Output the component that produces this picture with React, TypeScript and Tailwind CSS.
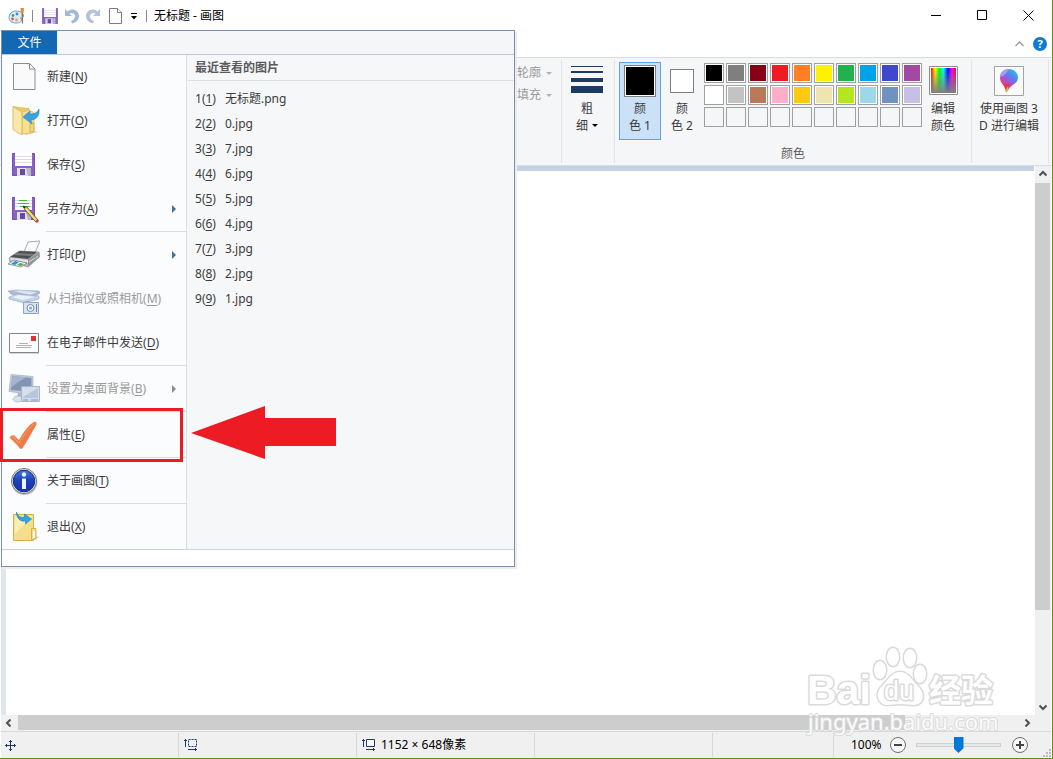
import { ReactNode } from 'react';

type MenuEntry = {
    label: string;
    accessKey: string;
    icon: ReactNode;
    submenu?: boolean;
    disabled?: boolean;
    divider?: boolean;
};

const palette = [
    ['#000000', '#7f7f7f', '#880015', '#ed1c24', '#ff7f27', '#fff200', '#22b14c', '#00a2e8', '#3f48cc', '#a349a4'],
    ['#ffffff', '#c3c3c3', '#b97a57', '#ffaec9', '#ffc90e', '#efe4b0', '#b5e61d', '#99d9ea', '#7092be', '#c8bfe7'],
    [null, null, null, null, null, null, null, null, null, null],
];

const recentFiles = ['无标题.png', '0.jpg', '7.jpg', '6.jpg', '5.jpg', '4.jpg', '3.jpg', '2.jpg', '1.jpg'];

function Icon({ children }: { children: ReactNode }) {
    return (
        <svg viewBox="0 0 32 32" className="size-8 shrink-0" aria-hidden="true">
            {children}
        </svg>
    );
}

function Floppy() {
    return (
        <>
            <path d="M4.5 4.5h22v22h-22z" fill="#8a63c0" stroke="#7450ac" />
            <path d="M7 4h17v13H7z" fill="#fff" />
            <path d="M7 7.5h17M7 10.5h17M7 13.5h17" stroke="#d9dbe0" />
            <path d="M9 19h14v8H9z" fill="#dfe1e6" />
            <path d="M12 20h5v6h-5z" fill="#6c4aa3" />
            <path d="M18 19h5v8h-3z" fill="#b4b8c3" />
        </>
    );
}

const newIcon = (
    <Icon>
        <path d="M5.5 2.5h16l5.5 5.5v20.5H5.5z" fill="#fafafa" stroke="#8c8c8c" strokeLinejoin="round" />
        <path d="M21.5 2.5V8H27z" fill="#fff" stroke="#8c8c8c" strokeLinejoin="round" />
    </Icon>
);

const openIcon = (
    <Icon>
        <path d="M12 27l16-1 3 1-13 3z" fill="#c9c9c9" opacity=".6" />
        <path d="M5 1.5l6 1 10 1v22l-9 2z" fill="#eccb66" stroke="#d8b354" strokeWidth=".7" />
        <path d="M14 7l7-2 5 3v18l-2 2-10 1z" fill="#f5df92" stroke="#d9b65a" strokeWidth=".7" />
        <path d="M5 1.5l8 5c1 1 1 2 1 3v20l-3-1-6-4z" fill="#f8e9a8" stroke="#d6b04f" strokeWidth=".8" />
        <path d="M22 18h4v9h-4z" fill="#f0d47c" stroke="#d2aa48" strokeWidth=".8" />
        <path d="M15 12l7-6v3c4 0 7-1 9-5 1 7-3 11-8 11l1 4z" fill="#37a3e0" stroke="#1f7fbe" strokeWidth=".5" />
    </Icon>
);

const saveIcon = (
    <Icon>
        <Floppy />
    </Icon>
);

const saveAsIcon = (
    <Icon>
        <Floppy />
        <path d="M11 7.5h8M10 10.5h11M12 13.5h10" stroke="#4fae4f" strokeWidth="1.2" />
        <path d="M15 13l4 1 11 13-2 2-11-12z" fill="#f3cf5c" stroke="#3b3324" strokeWidth=".7" />
        <path d="M15 13l1 2.5 2-1.5z" fill="#222" />
        <path d="M18 16l10 12" stroke="#fff3b0" strokeWidth=".8" />
        <path d="M27 28.5l2.5-2.5 1.500 2-2 2z" fill="#c83c34" />
    </Icon>
);

const printIcon = (
    <Icon>
        <path d="M16 13l4-10 12-1-6 14z" fill="#fbfbfb" stroke="#868686" strokeWidth=".7" />
        <path d="M1 19l10-7 20 1 .5 5L20 28 2 23z" fill="#b9babc" stroke="#8b8d8f" strokeWidth=".7" />
        <path d="M2 18l10-6 17 1-9 7z" fill="#4b4e50" />
        <path d="M9 14l17 1-3 2-18-1z" fill="#7a7d80" />
        <path d="M20 20l11-7 .5 5L20 28z" fill="#939598" />
        <path d="M21 23l9-6" stroke="#dcdddd" />
        <path d="M2 19l18 2v3L3 21z" fill="#e5e5e5" />
        <path d="M0 25l6-4 13 3-6 4z" fill="#eaf5fb" stroke="#6b7175" strokeWidth=".7" />
        <path d="M3 25l4-3 4 1-4 3z" fill="#2795d4" />
        <path d="M9 26l3-2 4 1-3 2z" fill="#58a948" />
        <path d="M26 18h2" stroke="#41b94c" />
    </Icon>
);

const scanIcon = (
    <Icon>
        <path d="M0 8l9-1 22 1 1 2-3 2-9 3L3 11z" fill="#a9bad2" stroke="#97a9c6" strokeWidth=".6" />
        <path d="M5 8l8-.5 16 1.500-7 3z" fill="#dbe5f2" />
        <path d="M1 14l8-3 22 2v3l-15 4-15-4z" fill="#c6d3e6" stroke="#97a9c6" strokeWidth=".6" />
        <path d="M4 14l7-2 16 2-12 3z" fill="#eaf0f8" />
        <path d="M15.5 19.5h15v11h-15z" fill="#d8e3f2" stroke="#8fa3c5" />
        <path d="M17 18h5v2h-5z" fill="#9fb1ce" />
        <circle cx="22.5" cy="25" r="3.5" fill="#f3f7fc" stroke="#748db5" />
        <circle cx="22.5" cy="25" r="1.5" fill="#8ba1c4" />
        <path d="M28.5 21v8" stroke="#6e88b1" />
    </Icon>
);

const mailIcon = (
    <Icon>
        <path d="M2 8h29v19H2z" fill="#d5d5d5" />
        <path d="M1.5 6.500h29v19h-29z" fill="#fcfcfc" stroke="#858585" strokeLinejoin="round" />
        <path d="M11 16.5h9M8 18.5h16M8 20.5h15" stroke="#b2b2b2" />
        <path d="M23 9h5v5h-5z" fill="#de3434" />
    </Icon>
);

const desktopIcon = (
    <Icon>
        <path d="M3 1.5l22 2v18L1 18.500z" fill="#c0cbdc" stroke="#a3b0c7" strokeWidth=".7" />
        <path d="M4.5 3l19 2v14L2.5 17z" fill="#8295b6" />
        <path d="M4.5 3l14 1.500C12 7 7 11 3 15z" fill="#a6b5ce" />
        <path d="M10 20h5l1 6H8z" fill="#aab8cf" />
        <ellipse cx="10" cy="26" rx="5" ry="3" fill="#d8e0ec" stroke="#a9b7cd" strokeWidth=".7" />
        <path d="M13.5 13.5h18v15h-18z" fill="#d1dbe9" stroke="#a9b7cd" />
        <path d="M15 15h15v10H15z" fill="#b8c6db" />
        <path d="M15 15h15L15 24z" fill="#d5dfed" />
        <path d="M15 27h5M23 27h7" stroke="#8396b6" />
    </Icon>
);

const propertiesIcon = (
    <Icon>
        <path
            d="M2 18.5c1-2 4-3 5-1l4 4C15 14 21 6 25 4c2-2 4-1 3 2-5 8-9 16-13 22-1 2-3 2-4 0-3-4-6-6-9-9.500z"
            fill="#ef7c46"
            stroke="#e06f3e"
            strokeWidth=".5"
        />
        <path d="M4 18c1-1 2 0 3 2l4 4C15 17 21 9 26 5" fill="none" stroke="#f7a073" />
    </Icon>
);

const aboutIcon = (
    <Icon>
        <defs>
            <linearGradient id="info" x1="0" y1="0" x2="0" y2="1">
                <stop offset="0" stopColor="#4b73db" />
                <stop offset=".5" stopColor="#173fbd" />
                <stop offset="1" stopColor="#1735a8" />
            </linearGradient>
        </defs>
        <circle cx="16.5" cy="17" r="13" fill="#bfbfbf" />
        <circle cx="16" cy="16" r="12.5" fill="#e8e8ea" stroke="#747980" />
        <circle cx="16" cy="16" r="10.8" fill="url(#info)" stroke="#1b3477" />
        <circle cx="16" cy="9.5" r="2.2" fill="#eef2fb" />
        <path d="M14 13.5h4V24h-4z" fill="#eef2fb" />
    </Icon>
);

const exitIcon = (
    <Icon>
        <path d="M10 28l18-3 3 1-3 3z" fill="#bbb" opacity=".6" />
        <path d="M5.5 3.5h20v26h-20z" fill="#f3de8c" stroke="#d6b04a" />
        <path d="M7 5h17L7 23z" fill="#f9eeb4" />
        <path d="M23.5 17.5h4.500v9l-4.500 3z" fill="#f3dc82" stroke="#d6b04a" />
        <path d="M25 20h2v7h-2z" fill="#fff" />
        <path d="M8.5 1c1 4 4 6 8 5V3l7 5-6 5v-3C12 11 8.5 7 8.5 1z" fill="#2da5e6" stroke="#1a7fb8" strokeWidth=".6" />
    </Icon>
);

const menuEntries: MenuEntry[] = [
    { label: '新建', accessKey: 'N', icon: newIcon },
    { label: '打开', accessKey: 'O', icon: openIcon },
    { label: '保存', accessKey: 'S', icon: saveIcon },
    { label: '另存为', accessKey: 'A', icon: saveAsIcon, submenu: true, divider: true },
    { label: '打印', accessKey: 'P', icon: printIcon, submenu: true },
    { label: '从扫描仪或照相机', accessKey: 'M', icon: scanIcon, disabled: true },
    { label: '在电子邮件中发送', accessKey: 'D', icon: mailIcon, divider: true },
    { label: '设置为桌面背景', accessKey: 'B', icon: desktopIcon, submenu: true, disabled: true, divider: true },
    { label: '属性', accessKey: 'E', icon: propertiesIcon, divider: true },
    { label: '关于画图', accessKey: 'T', icon: aboutIcon, divider: true },
    { label: '退出', accessKey: 'X', icon: exitIcon },
];

function TitleBar() {
    return (
        <header className="flex h-[31px] shrink-0 items-center bg-white pl-2">
            <svg viewBox="0 0 18 18" className="size-[18px]" aria-hidden="true">
                <path
                    d="M8 4C4 4 1 7 1 10.500S4 16 8 16s5-1 5.500-3S11 11 13 11s3-1 2.500-3C15 6 12 4 8 4z"
                    fill="#dcecf7"
                    stroke="#5fa3d6"
                />
                <circle cx="5" cy="8.5" r="1.4" fill="#4ba64f" />
                <circle cx="9" cy="7" r="1.4" fill="#3f87d0" />
                <circle cx="4.5" cy="12" r="1.4" fill="#e2574c" />
                <circle cx="8.5" cy="13" r="1.4" fill="#f1a52f" />
                <path d="M12.5 1h3.500l-.5 5h-2.500z" fill="#e08a3c" />
                <path d="M13.5 6H15v10l-1 1z" fill="#a8683a" />
            </svg>
            <span className="ml-[6px] h-3 w-px bg-[#8a8a8a]" />
            <button type="button" aria-label="保存" className="ml-2">
                <svg viewBox="4 4 23 23" className="size-[18px] p-px">
                    <Floppy />
                </svg>
            </button>
            <button type="button" aria-label="撤消" className="ml-1">
                <svg viewBox="0 0 18 18" className="size-[18px]">
                    <path d="M2 2v7h7L6.5 6.500C9 5 12 6.500 12 9s-1.500 4-4 5l1 2.500c4-1 7-3.500 7-7.500 0-5-6-9-11.500-4.500z" fill="#a3b8d8" />
                </svg>
            </button>
            <button type="button" aria-label="重做" className="ml-1">
                <svg viewBox="0 0 18 18" className="size-[18px]">
                    <path d="M15 2v7H8l2.500-2.500C8 5 5 6.500 5 9s1.500 4 4 5l-1 2.500C4 15.500 1 13 1 9c0-5 6-9 11.500-4.500z" fill="#b4c3dc" />
                </svg>
            </button>
            <button type="button" aria-label="新建" className="ml-1">
                <svg viewBox="0 0 18 18" className="size-[18px]">
                    <path d="M2.5 1.5h8l4 4v11h-12z" fill="#fbfbfb" stroke="#7d7d7d" />
                    <path d="M10.5 1.5v4h4" fill="#fff" stroke="#7d7d7d" />
                </svg>
            </button>
            <button type="button" aria-label="自定义快速访问工具栏" className="ml-[5px]">
                <svg viewBox="0 0 8 8" className="size-2">
                    <path d="M1 1.5h6" stroke="#000" />
                    <path d="M1 4h6L4 7.5z" fill="#000" />
                </svg>
            </button>
            <span className="ml-2 h-3 w-px bg-[#8a8a8a]" />
            <h1 className="ml-[7px] text-black">无标题 - 画图</h1>
            <div className="ml-auto flex">
                <button type="button" aria-label="最小化" className="flex h-[30px] w-[45px] items-center justify-center">
                    <svg viewBox="0 0 11 11" className="size-[11px]">
                        <path d="M0 5.5h10" stroke="#000" />
                    </svg>
                </button>
                <button type="button" aria-label="最大化" className="flex h-[30px] w-[46px] items-center justify-center">
                    <svg viewBox="0 0 11 11" className="size-[11px]">
                        <path d="M.5.5h9v9h-9z" fill="none" stroke="#000" />
                    </svg>
                </button>
                <button type="button" aria-label="关闭" className="flex h-[30px] w-[46px] items-center justify-center">
                    <svg viewBox="0 0 11 11" className="size-[11px]">
                        <path d="M.5.5l10 10M10.5.5l-10 10" stroke="#000" />
                    </svg>
                </button>
            </div>
        </header>
    );
}

function CaretDown({ className }: { className: string }) {
    return (
        <svg viewBox="0 0 6 3" className={className} aria-hidden="true">
            <path d="M0 0h6L3 3z" fill="currentColor" />
        </svg>
    );
}

function Ribbon() {
    return (
        <section className="flex h-[109px] shrink-0 border-y border-[#dadbdc] bg-[#f5f6f7] pt-[2px] text-[#3b3b3b]">
            <div className="flex h-[103px] w-[562px] shrink-0 flex-col items-end border-r border-[#e2e3e4] pt-[2px] pr-[9px] leading-[22px] text-[#9a9a9a]">
                <button type="button" disabled className="flex items-center gap-[5px]">
                    轮廓
                    <CaretDown className="h-[3px] w-[6px] text-[#b4b4b4]" />
                </button>
                <button type="button" disabled className="flex items-center gap-[5px]">
                    填充
                    <CaretDown className="h-[3px] w-[6px] text-[#b4b4b4]" />
                </button>
            </div>

            <div className="flex h-[103px] w-[53px] shrink-0 justify-center border-r border-[#e2e3e4] pr-[2px]">
                <button type="button" className="flex flex-col items-center pt-[6px] leading-[17px]">
                    <span className="mb-[7px] flex w-8 flex-col text-[#1f3a60]">
                        <span className="h-px bg-current" />
                        <span className="mt-1 h-[2px] bg-current" />
                        <span className="mt-[5px] h-1 bg-current" />
                        <span className="mt-1 h-[7px] bg-current" />
                    </span>
                    <span>粗</span>
                    <span className="flex items-center gap-1">
                        细
                        <CaretDown className="h-[3px] w-[6px] text-black" />
                    </span>
                </button>
            </div>

            <div className="flex h-[103px] w-[357px] shrink-0 flex-col border-r border-[#e2e3e4] px-1 pt-[2px]">
                <div className="flex items-start">
                    <button
                        type="button"
                        className="flex h-[78px] w-[42px] flex-col items-center border border-[#62a2e4] bg-[#cbe1f7] pt-[2px] leading-[17px]"
                    >
                        <span className="mb-[3px] size-8 border border-[#7f7f7f] bg-white p-px">
                            <span className="block size-full bg-black" />
                        </span>
                        <span>颜</span>
                        <span>色 1</span>
                    </button>
                    <button type="button" className="flex h-[78px] w-[42px] flex-col items-center pt-[7px] leading-[17px]">
                        <span className="mb-[7px] size-6 border border-[#7f7f7f] bg-white" />
                        <span>颜</span>
                        <span>色 2</span>
                    </button>
                    <div className="ml-px grid grid-cols-10 gap-[2px] pt-px">
                        {palette.flat().map((color, i) => (
                            <button
                                key={i}
                                type="button"
                                aria-label={color ?? '自定义颜色'}
                                className="size-5 border border-[#a0a0a0] p-px"
                                style={{ background: color ? '#fff' : undefined }}
                            >
                                <span className="block size-full" style={{ background: color ?? undefined }} />
                            </button>
                        ))}
                    </div>
                    <button type="button" className="ml-[5px] flex w-8 flex-col items-center pt-1 leading-[17px]">
                        <svg viewBox="0 0 29 30" className="mb-[4px] h-[30px] w-[29px]">
                            <defs>
                                <linearGradient id="hue">
                                    <stop offset="0" stopColor="#f00" />
                                    <stop offset=".17" stopColor="#ff0" />
                                    <stop offset=".33" stopColor="#0f0" />
                                    <stop offset=".5" stopColor="#0ff" />
                                    <stop offset=".67" stopColor="#00f" />
                                    <stop offset=".84" stopColor="#f0f" />
                                    <stop offset="1" stopColor="#f00" />
                                </linearGradient>
                                <linearGradient id="fade" x1="0" y1="0" x2="0" y2="1">
                                    <stop offset="0" stopColor="#808080" stopOpacity="0" />
                                    <stop offset="1" stopColor="#808080" />
                                </linearGradient>
                            </defs>
                            <path d="M.5.5h28v28H.5z" fill="#fff" stroke="#8d8d8d" />
                            <path d="M2 2h25v25H2z" fill="url(#hue)" />
                            <path d="M2 2h25v25H2z" fill="url(#fade)" />
                        </svg>
                        <span>编辑</span>
                        <span>颜色</span>
                    </button>
                </div>
                <div className="mt-[5px] text-center leading-[18px] text-[#5a5a5a]">颜色</div>
            </div>

            <div className="flex h-[103px] min-w-[77px] grow justify-center border-r border-[#e2e3e4] pr-[2px]">
                <button type="button" className="flex flex-col items-center pt-[6px] leading-[17px] whitespace-nowrap">
                    <svg viewBox="0 0 30 30" className="mb-[4px] size-[30px]">
                        <defs>
                            <linearGradient id="drop" x1=".9" y1="0" x2=".2" y2="1">
                                <stop offset="0" stopColor="#1fd0f0" />
                                <stop offset=".35" stopColor="#5a7fee" />
                                <stop offset=".6" stopColor="#b04fd0" />
                                <stop offset=".8" stopColor="#ee4060" />
                                <stop offset="1" stopColor="#f7a030" />
                            </linearGradient>
                        </defs>
                        <path d="M.5.5h29v29H.5z" fill="#fafafa" stroke="#a3a3a3" />
                        <path d="M15 3c5 0 9 4 9 8.500 0 6-6 7-9 11-1 2-2 3-3 4-.5-3 .5-5-2-7-3-2.500-4-5-4-8C6 7 10 3 15 3z" fill="url(#drop)" />
                        <path d="M6 11c0-5 4-8 9-8-2 4-5 7-9 8z" fill="#a59cf4" />
                        <path d="M8 17c3 2 6 1 9 0-2 3-3 4-5 9-.5-4-2-6-4-9z" fill="#e83458" />
                        <path d="M12 26.5c0-3 0-4 2-6 1 2 0 4-2 6z" fill="#f6b02c" />
                    </svg>
                    <span>使用画图 3</span>
                    <span>D 进行编辑</span>
                </button>
            </div>
            <div className="w-[2px]" />
        </section>
    );
}

function ScrollButton({ label, d }: { label: string; d: string }) {
    return (
        <button type="button" aria-label={label} className="flex size-4 shrink-0 items-center justify-center">
            <svg viewBox="0 0 8 8" className="size-2">
                <path d={d} fill="none" stroke="#505050" strokeWidth="2" />
            </svg>
        </button>
    );
}

function Workspace() {
    return (
        <main className="flex min-h-0 flex-1 flex-col pl-px">
            <div className="flex min-h-0 flex-1">
                <div className="flex min-w-0 flex-1 flex-col">
                    <div className="mr-px h-[5px] bg-[#c6d0e2]" />
                    <div className="flex-1 border-l-5 border-[#dce6f1] bg-white" />
                </div>
                <div className="flex w-4 flex-col bg-[#f0f0f0]">
                    <ScrollButton label="向上" d="M.5 5.5L4 2l3.500 3.500" />
                    <div className="mt-px mr-px h-[427px] bg-[#cdcdcd]" />
                    <div className="flex-1" />
                    <ScrollButton label="向下" d="M.5 2.5L4 6l3.500-3.500" />
                </div>
            </div>
            <div className="flex h-4 shrink-0 bg-[#f0f0f0] pr-4">
                <ScrollButton label="向左" d="M5.5.5L2 4l3.500 3.500" />
                <div className="ml-px h-[15px] w-[887px] bg-[#cdcdcd]" />
                <div className="flex-1" />
                <ScrollButton label="向右" d="M2.5.5L6 4 2.500 7.500" />
            </div>
        </main>
    );
}

function StatusBar() {
    return (
        <footer className="ml-px flex h-[27px] shrink-0 border-t border-[#d9d9d9] bg-[#f0f0f0] py-px text-black">
            <div className="flex w-[178px] items-center border-r border-[#d7d7d7] pl-1">
                <svg viewBox="0 0 11 11" className="size-[11px]">
                    <path d="M5.5 0v11M0 5.5h11M4 1.5h3M4 9.500h3M1.5 4v3M9.5 4v3" stroke="#1f3a60" />
                </svg>
            </div>
            <div className="flex w-[178px] items-center border-r border-[#d7d7d7] pl-[5px]">
                <svg viewBox="0 0 13 12" className="h-3 w-[13px]">
                    <path d="M1.5 0v8M0 1.5h3M4 10.5h9M11.5 9v3" stroke="#1f3a60" />
                    <path d="M4.5.5h8v7h-8z" fill="none" stroke="#1f3a60" strokeDasharray="2 1" />
                </svg>
            </div>
            <div className="flex w-[178px] items-center border-r border-[#d7d7d7] pl-[5px]">
                <svg viewBox="0 0 13 12" className="mr-[6px] h-3 w-[13px]">
                    <path d="M1.5 0v8M0 1.5h3M4 10.5h9M11.5 9v3" stroke="#1f3a60" />
                    <path d="M4.5.5h8v7h-8z" fill="#fff" stroke="#1f3a60" />
                </svg>
                <span>1152 × 648像素</span>
            </div>
            <div className="w-[178px] border-r border-[#d7d7d7]" />
            <div className="flex-1 border-r border-[#d7d7d7]" />
            <div className="flex w-[217px] items-center pl-[17px]">
                <label htmlFor="zoom" className="w-8">
                    100%
                </label>
                <button type="button" aria-label="缩小" className="ml-[7px]">
                    <svg viewBox="0 0 16 16" className="size-4">
                        <circle cx="8" cy="8" r="7.5" fill="#f8f8f8" stroke="#6f6f6f" />
                        <path d="M4 8h8" stroke="#444" strokeWidth="2" />
                    </svg>
                </button>
                <input
                    id="zoom"
                    type="range"
                    defaultValue={50}
                    className="ml-[10px] h-4 w-[85px] appearance-none bg-transparent [&::-webkit-slider-runnable-track]:h-1 [&::-webkit-slider-runnable-track]:border [&::-webkit-slider-runnable-track]:border-[#d0d0d0] [&::-webkit-slider-runnable-track]:bg-[#e7eaea] [&::-webkit-slider-thumb]:-mt-[7px] [&::-webkit-slider-thumb]:h-4 [&::-webkit-slider-thumb]:w-[10px] [&::-webkit-slider-thumb]:appearance-none [&::-webkit-slider-thumb]:bg-[#0078d7] [&::-webkit-slider-thumb]:[clip-path:polygon(0_0,100%_0,100%_70%,50%_100%,0_70%)]"
                />
                <button type="button" aria-label="放大" className="ml-[11px]">
                    <svg viewBox="0 0 16 16" className="size-4">
                        <circle cx="8" cy="8" r="7.5" fill="#f8f8f8" stroke="#6f6f6f" />
                        <path d="M4 8h8M8 4v8" stroke="#444" strokeWidth="2" />
                    </svg>
                </button>
                <svg viewBox="0 0 8 8" className="ml-auto size-2 self-end" aria-hidden="true">
                    <path d="M6 0h2v2H6zM3 3h2v2H3zM6 3h2v2H6zM0 6h2v2H0zM3 6h2v2H3zM6 6h2v2H6z" fill="#bcbcbc" />
                </svg>
            </div>
        </footer>
    );
}

function FileMenu() {
    return (
        <div className="absolute top-[30px] left-px flex w-[514px] flex-col border border-[#7b8fab] bg-white shadow-[2px_2px_0_#ececee]">
            <div className="flex h-6 border-b border-[#b9c9dc] bg-[#f5f6f7]">
                <button type="button" className="w-[55px] bg-[#1467b3] text-white">
                    文件
                </button>
            </div>
            <div className="flex bg-[#f5f7f9]">
                <ul className="w-[185px] border-r border-[#dcdee0] bg-[#fbfcfe]">
                    {menuEntries.map((entry) => (
                        <li key={entry.accessKey}>
                            <button
                                type="button"
                                disabled={entry.disabled}
                                className="flex h-11 w-full items-center gap-[7px] pr-[10px] pl-[6px] text-[#3b3b3b] disabled:text-[#9a9a9a]"
                            >
                                {entry.icon}
                                <span>
                                    {entry.label}(<u className="underline-offset-2">{entry.accessKey}</u>)
                                </span>
                                {entry.submenu && (
                                    <svg
                                        viewBox="0 0 4 8"
                                        className={entry.disabled ? 'ml-auto h-2 w-1 text-[#8c8c8c]' : 'ml-auto h-2 w-1 text-[#4d6a8f]'}
                                    >
                                        <path d="M0 0l4 4-4 4z" fill="currentColor" />
                                    </svg>
                                )}
                            </button>
                            {entry.divider && <div className="ml-11 h-[2px] border-t border-[#d9dbde]" />}
                        </li>
                    ))}
                </ul>
                <div className="flex-1">
                    <h2 className="mb-[5px] ml-px h-[26px] border-b border-[#dcdee0] pl-[7px] leading-[25px] font-bold text-[#5a5a5a]">
                        最近查看的图片
                    </h2>
                    <ol>
                        {recentFiles.map((file, i) => (
                            <li key={file}>
                                <button type="button" className="flex h-[25px] w-full items-center pl-2 text-[#3b3b3b]">
                                    <span className="w-[30px] text-left">
                                        {i + 1}(<u className="underline-offset-2">{i + 1}</u>)
                                    </span>
                                    {file}
                                </button>
                            </li>
                        ))}
                    </ol>
                </div>
            </div>
            <div className="h-[17px] border-t border-[#c8d4e3]" />
        </div>
    );
}

function Watermark() {
    return (
        <svg
            viewBox="0 0 200 96"
            className="pointer-events-none absolute right-[51px] bottom-[18px] h-24 w-[200px] font-['Liberation_Sans','Noto_Sans_CJK_SC',sans-serif]"
        >
            <g fill="#fff" stroke="#dadada" strokeWidth="3" strokeLinejoin="round" paintOrder="stroke">
                <ellipse cx="79" cy="26" rx="6" ry="9" />
                <ellipse cx="92" cy="13" rx="6" ry="9" />
                <ellipse cx="109" cy="14" rx="6" ry="9" />
                <ellipse cx="119" cy="30" rx="6" ry="9" />
                <path d="M99 28c8 0 12 8 18 14 7 7 7 18-4 19-5 0-9-1-14-1s-9 1-13 1c-10-1-12-12-5-19 6-6 10-14 18-14z" />
                <text x="6" y="60" fontSize="41" fontWeight="bold">
                    Bai
                </text>
                <text x="83" y="56" fontSize="27">
                    du
                </text>
                <text x="128" y="58" fontSize="32" fontWeight="bold">
                    经验
                </text>
                <text x="7" y="86" fontSize="22" strokeWidth="2" fillOpacity=".9" className="font-['Noto_Sans',sans-serif]">
                    jingyan.baidu.com
                </text>
            </g>
        </svg>
    );
}

export default function App() {
    return (
        <div className="relative flex h-screen flex-col overflow-hidden border-r border-b border-[#5c8f1c] bg-white pr-px font-['Noto_Sans','Noto_Sans_CJK_SC',sans-serif] text-xs">
            <TitleBar />
            <div className="flex h-[26px] shrink-0 items-center justify-end gap-[6px] pr-1">
                <button type="button" aria-label="折叠功能区" className="p-[3px]">
                    <svg viewBox="0 0 9 6" className="h-[6px] w-[9px]">
                        <path d="M.5 5l4-4 4 4" fill="none" stroke="#a0a0a0" strokeWidth="1.5" />
                    </svg>
                </button>
                <button
                    type="button"
                    aria-label="帮助"
                    className="size-[14px] rounded-full bg-[#0f7ad4] text-[11px] leading-[14px] font-bold text-white"
                >
                    ?
                </button>
            </div>
            <Ribbon />
            <Workspace />
            <StatusBar />
            <FileMenu />
            <div className="pointer-events-none absolute top-[408px] left-0 h-[54px] w-[183px] border-3 border-[#ed1c24]" />
            <svg viewBox="0 0 146 54" className="pointer-events-none absolute top-[406px] left-[191px] h-[54px] w-[146px]">
                <path d="M0 27L74 0v12h71v28H74v13z" fill="#ed1c24" />
            </svg>
            <Watermark />
        </div>
    );
}
